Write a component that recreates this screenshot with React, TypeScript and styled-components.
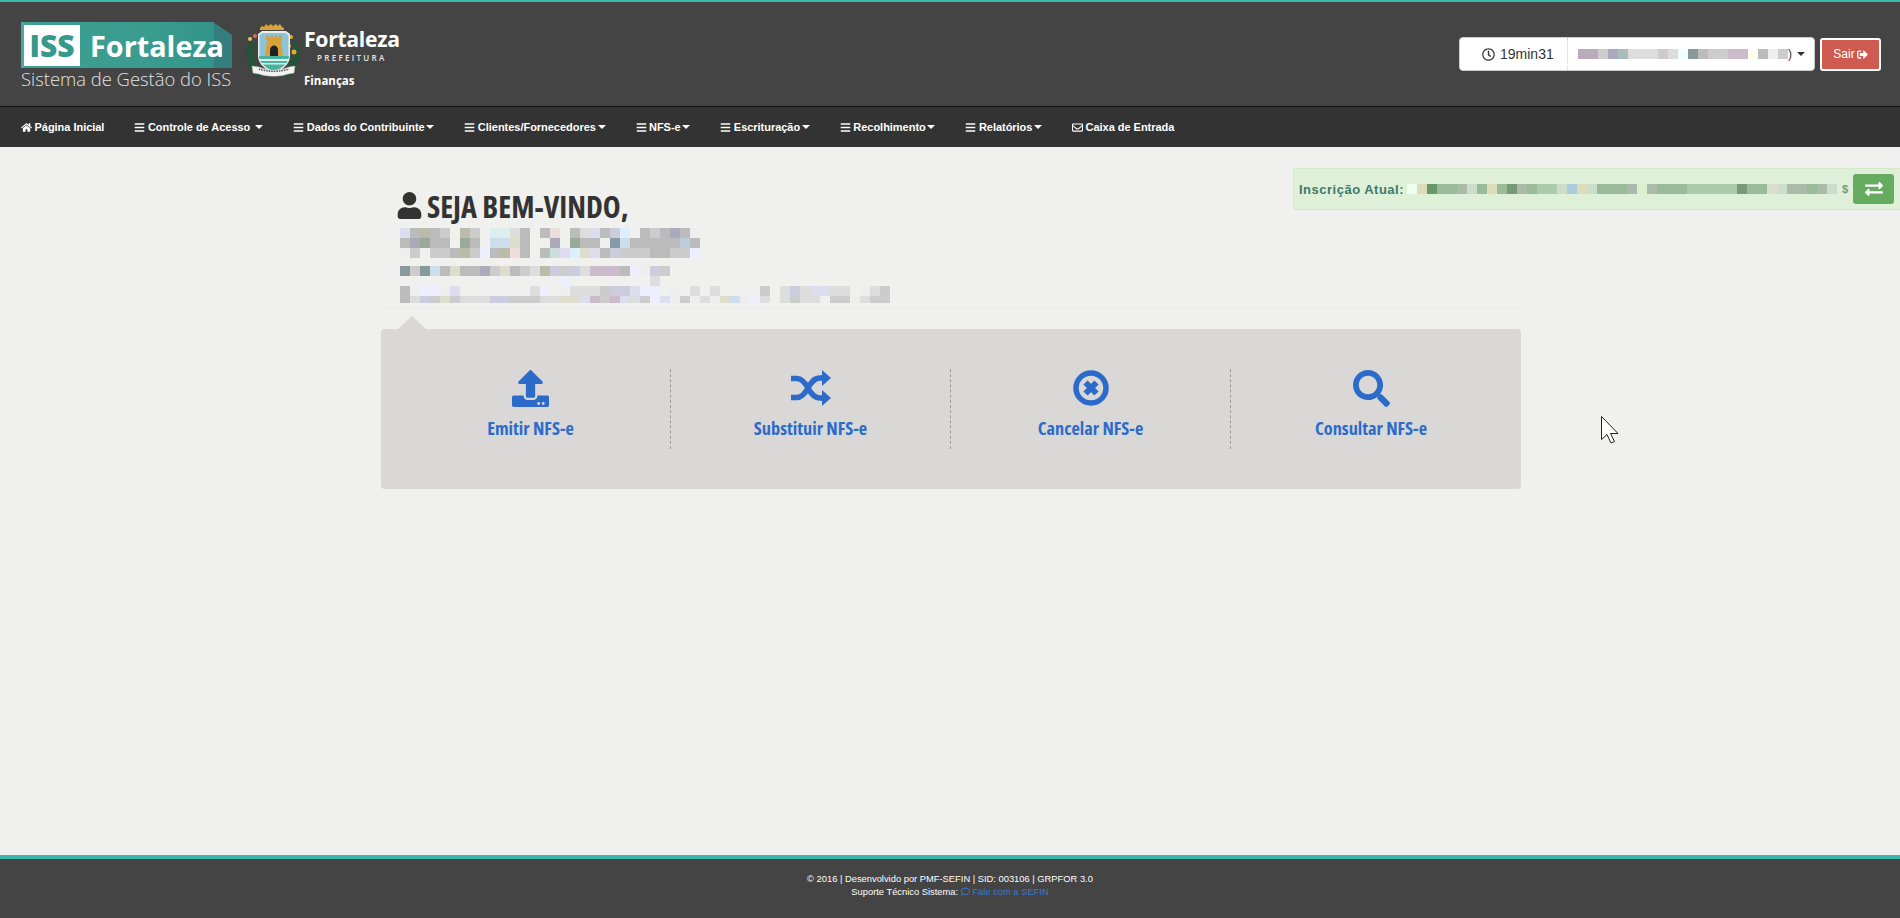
import React from "react";
import styled, { createGlobalStyle } from "styled-components";
import {
  FaHome, FaBars, FaRegEnvelope, FaRegClock, FaSignOutAlt, FaExchangeAlt, FaUser,
  FaUpload, FaSearch, FaRegComment,
} from "react-icons/fa";

const Global = createGlobalStyle`
  html, body { margin: 0; padding: 0; height: 100%; }
  body { background: #f0f0ee; font-family: "Liberation Sans", Arial, sans-serif; overflow: hidden; }
  * { box-sizing: border-box; }
`;

const Page = styled.div`
  height: 100vh;
  display: flex;
  flex-direction: column;
  position: relative;
`;

const Header = styled.header`
  height: 107px;
  flex: none;
  background: #444;
  border-top: 2px solid #3ab7ae;
  border-bottom: 1px solid #111;
  display: flex;
  align-items: flex-start;
  justify-content: space-between;
  padding: 20px 19px 0 21px;
`;

const Brand = styled.div`
  display: flex;
  align-items: flex-start;
`;

const IssLogo = styled.div`
  width: 211px;
  display: flex;
  flex-direction: column;
`;

const Banner = styled.div`
  height: 46px;
  background: linear-gradient(90deg, #45a9b2 0, #45a9b2 1.5%, #3da193 1.6%, #3a9b8f 60%, #33958a 91.4%, #347e80 91.5%);
  clip-path: polygon(0 0, 91% 0, 100% 28%, 100% 100%, 0 100%);
  display: flex;
  align-items: center;
  padding-left: 3px;
`;

const IssBox = styled.div`
  width: 56px;
  height: 41px;
  background: #fff;
  color: #36998c;
  font: 800 30px/41px "Open Sans", sans-serif;
  text-align: center;
`;

const BannerName = styled.div`
  color: #fff;
  font: 700 28.8px/41px "Open Sans", sans-serif;
  margin-left: 10px;
`;

const Tagline = styled.div`
  color: #e2e2e2;
  font: 300 18.4px/22px "Open Sans", sans-serif;
  margin-top: 0;
  white-space: nowrap;
`;

const Crest = styled.svg`
  width: 56px;
  height: 58px;
  margin: 0 0 0 13px;
  flex: none;
`;

const CityBlock = styled.div`
  margin-left: 3px;
  padding-top: 3px;
  color: #fff;
  display: flex;
  flex-direction: column;
`;

const CityName = styled.div`
  font: 700 21.2px/28px "Open Sans", sans-serif;
  letter-spacing: -0.3px;
`;

const CitySub = styled.div`
  font: 600 8px/10px "Open Sans", sans-serif;
  letter-spacing: 2.3px;
  margin-left: 13px;
  color: #e6e6e6;
`;

const CityDept = styled.div`
  font: 700 11.5px/14px "Open Sans", sans-serif;
  margin-top: 11px;
`;

const TopRight = styled.div`
  display: flex;
  align-items: center;
  gap: 5px;
  margin-top: 15px;
`;

const Session = styled.div`
  width: 356px;
  height: 34px;
  background: #fff;
  border: 1px solid #ccc;
  border-radius: 4px;
  display: flex;
  align-items: center;
  color: #333;
  font-size: 14px;
`;

const Timer = styled.div`
  width: 108px;
  height: 100%;
  border-right: 1px dotted #d0d0d0;
  display: flex;
  align-items: center;
  gap: 5px;
  padding-left: 22px;
  svg { font-size: 13px; }
`;

const UserName = styled.div`
  flex: 1;
  display: flex;
  align-items: center;
  padding-left: 10px;
  font-size: 12px;
`;

const Caret = styled.span<{ $gap?: number }>`
  display: inline-block;
  width: 0;
  height: 0;
  margin-left: ${(p) => p.$gap ?? 1.7}px;
  border-top: 4px solid currentColor;
  border-left: 4px solid transparent;
  border-right: 4px solid transparent;
`;

const Exit = styled.button`
  width: 61px;
  height: 33px;
  background: #cf5a50;
  color: #fff;
  border: 2px solid #fff;
  border-radius: 3px;
  font: 12px "Liberation Sans", Arial, sans-serif;
  display: flex;
  align-items: center;
  justify-content: center;
  gap: 2px;
  padding: 0;
  svg { font-size: 11px; }
`;

const Nav = styled.nav`
  height: 40px;
  flex: none;
  background: #333;
  display: flex;
  align-items: center;
  padding-left: 6px;
`;

const NavItem = styled.a`
  padding: 0 15px;
  display: flex;
  align-items: center;
  color: #fff;
  font: 700 11px "Liberation Sans", Arial, sans-serif;
  letter-spacing: -0.03px;
  white-space: nowrap;
  svg { font-size: 11px; margin-right: 2.5px; }
`;

const Main = styled.main`
  flex: 1;
  min-height: 0;
  padding-left: 2px;
`;

const Inscription = styled.div`
  float: right;
  width: 607px;
  height: 42px;
  margin-top: 21px;
  background: #dff0d8;
  border: 1px solid #d6e9c6;
  border-right: none;
  border-radius: 4px 0 0 4px;
  display: flex;
  align-items: center;
  padding-left: 5px;
  color: #3d7a6b;
  font-size: 13px;
  font-weight: 700;
`;

const InscriptionLabel = styled.span`
  letter-spacing: 0.5px;
  margin-right: 3px;
`;

const MaskEnd = styled.span`
  margin-left: 5px;
  font-size: 11px;
  color: #6c9a86;
`;

const SwapButton = styled.button`
  width: 41px;
  height: 30px;
  margin-left: auto;
  margin-right: 6px;
  background: #66ac60;
  border: none;
  border-radius: 3px;
  color: #fff;
  font-size: 18px;
  display: flex;
  align-items: center;
  justify-content: center;
  padding: 0;
`;

const Container = styled.div`
  width: 1140px;
  margin: 0 auto;
  padding-top: 41px;
`;

const Greeting = styled.h1`
  margin: 0 0 0 15px;
  height: 40px;
  display: flex;
  align-items: flex-start;
  gap: 4px;
  color: #333;
  font: 700 30.2px/38px "Open Sans", sans-serif;
  font-stretch: 75%;
  text-transform: uppercase;
  svg { font-size: 27px; margin-top: 4px; }
`;

const MosaicSvg = styled.svg`
  display: block;
  shape-rendering: crispEdges;
  flex: none;
`;

const WhoBlock = styled.div`
  margin-left: 19px;
  margin-top: 0;
  display: flex;
  flex-direction: column;
  gap: 8px;
`;

const Rule = styled.div`
  height: 1px;
  background: #ebebe9;
  margin-top: 5px;
`;

const Panel = styled.section`
  position: relative;
  margin-top: 20px;
  height: 160px;
  background: #d9d8d6;
  border-radius: 4px;
  padding: 40px 10px 0;
  display: grid;
  grid-template-columns: repeat(4, 1fr);
  align-items: start;
  &::before {
    content: "";
    position: absolute;
    left: 17px;
    top: -13px;
    border-left: 14px solid transparent;
    border-right: 14px solid transparent;
    border-bottom: 13px solid #d9d8d6;
  }
`;

const Action = styled.a`
  height: 80px;
  display: flex;
  flex-direction: column;
  align-items: center;
  color: #2d6bcb;
  border-right: 1px dashed #9a9c98;
  &:last-child { border-right: none; }
`;

const ActionIcon = styled.div`
  height: 46px;
  margin-top: 1px;
  display: flex;
  align-items: flex-start;
  justify-content: center;
  font-size: 37px;
`;

const ActionLabel = styled.div`
  font: 700 18.3px/24px "Open Sans", sans-serif;
  font-stretch: 75%;
`;

const Footer = styled.footer`
  height: 63px;
  flex: none;
  background: #444;
  border-top: 4px solid #3ab7ae;
  padding-top: 14px;
  color: #fff;
  font: 9.36px/13px "Liberation Sans", Arial, sans-serif;
  text-align: center;
`;

const FooterLink = styled.a`
  color: #3c78cf;
  svg { font-size: 9px; vertical-align: -1px; }
`;

const Pointer = styled.svg`
  position: absolute;
  left: 1600px;
  top: 415px;
  width: 20px;
  height: 30px;
`;

type MosaicProps = { rows: string[]; cell?: number; rowHeights?: number[] };

function Mosaic({ rows, cell = 10, rowHeights }: MosaicProps) {
  const parsed = rows.map((r) => r.split(" "));
  const width = Math.max(...parsed.map((r) => r.length)) * cell;
  let y = 0;
  const rects: React.ReactNode[] = [];
  parsed.forEach((r, i) => {
    const h = rowHeights?.[i] ?? cell;
    r.forEach((c, j) => {
      if (c !== ".") rects.push(<rect key={`${i}-${j}`} x={j * cell} y={y} width={cell} height={h} fill={`#${c}`} />);
    });
    y += h;
  });
  return (
    <MosaicSvg width={width} height={y} viewBox={`0 0 ${width} ${y}`}>
      {rects}
    </MosaicSvg>
  );
}

const CrestArt = () => (
  <Crest viewBox="0 0 56 58">
    <path d="M14 56C4 50 0 38 2 26c1-4 3-7 6-9 0 13 2 26 10 36zM42 56c10-6 14-18 12-30-1-4-3-7-6-9 0 13-2 26-10 36z" fill="#24523a" />
    <circle cx="5" cy="17" r="2" fill="#e8c25a" /><circle cx="10" cy="14" r="2" fill="#d8704a" />
    <circle cx="46" cy="15" r="2" fill="#e8a92a" /><circle cx="49" cy="30" r="2.5" fill="#e8a92a" /><circle cx="44" cy="24" r="2" fill="#e8a92a" />
    <path d="M15 6l2-2 2 1 2-3 2 2 3-2 2 2 3-2 2 2 2-2 2 3 2 1v2H15z" fill="#d9a13a" />
    <path d="M17 9h24l4 3v22c0 8-8 14-16 18-8-4-16-10-16-18V12z" fill="#e9eef0" />
    <path d="M14.500 13l3-2h23l3 2v21H14.500z" fill="#8cc4d8" />
    <path d="M14 34h30c0 7-7 12-15 16-8-4-15-9-15-16z" fill="#49b29c" />
    <path d="M20 34l2-16h-1v-5h3v2h2v-2h2v2h2v-2h2v2h2v-2h3v5h-1l2 16z" fill="#d9a13a" />
    <path d="M25 34v-6c0-6 8-6 8 0v6z" fill="#222" />
    <path d="M14 37h30v2H14zM16 41h26v1.500H16z" fill="#dff0e8" />
    <path d="M7 44l7 1c8 4 22 4 30 0l6-1-1 7-6 1c-8 3-21 3-29 0l-6-1z" fill="#f4f4f4" stroke="#bbb" strokeWidth=".5" />
    <path d="M14 47c8 3 22 3 30 0" stroke="#555" strokeWidth="1.500" strokeDasharray="1.500 1" fill="none" />
  </Crest>
);

const ShuffleIcon = () => (
  <svg width="40" height="36" viewBox="0 0 40 36">
    <path d="M0 8.500h6c5 0 8 4 11 9.500s6 10 12 10h4M0 27.500h6c5 0 8-4 11-9.500s6-10 12-10h4" fill="none" stroke="currentColor" strokeWidth="5.500" />
    <path d="M31 0l9 8-9 8zM31 20l9 8-9 8z" fill="currentColor" />
  </svg>
);

const CancelIcon = () => (
  <svg width="36" height="36" viewBox="0 0 36 36">
    <circle cx="18" cy="18" r="15" fill="none" stroke="currentColor" strokeWidth="5.500" />
    <path d="M12.500 12.500l11 11M23.500 12.500l-11 11" fill="none" stroke="currentColor" strokeWidth="6" />
  </svg>
);

const m1 = [
  "dde bbb bba bbb ccc . bba ccc . dee dee ddd bbb . bbb edd . bbb ddd dde bbb ccd def . bbb ccc bbb aab bbb eee",
  "bbb aab 9a9 bbb bbb . 9a9 bbb . cde cde ddc bbb . . aab . 9a9 bbb bbb . 89a cde bbb bbb bbb bbb bbb bcd bbb",
  "eee ccc . ccc ccc bbb bba ccc eef bbb bba edd bbb . bbb cdd dde def ddc dde bbb ccd ccc ccc ccc bbb bbb ccc ccc eef",
];
const m2 = [
  "899 ccc 899 cde bbb ddc bbb bbb aab ccc ddc bbb ccc ddd bba ccd ccc ccd ddd cbc cbc cbc bbb eef eee ccd ccc",
  ". . . . . . . . . . . . . . . . eef . . . . . . . . ddd",
];
const m3 = [
  "bbb eee eef eef eee dde . . . . . . . ddd eef . eee ddd ddd ddd ccc ccd ccd dde eef eef . eee . ddd . ddd . . . . ccc . ddd ccd ddd dde dde ddd ddd . eee ddd ccc",
  "bbb ddd ccd ccc ddc ccc ddd ddd ddd ccd ccd ccc ccc ccc ddd ddd ddc ddc dde cbc ccc cbc dde ddd ccc eef dde eee ccc eee ddd eee ddc cde eee eef ddd . ddd ccc ddd ddd . ccc ccc eee ddd ccc ccc",
];
const mUser = ["bab bab ccc aab abb ddd ddd ddd ccc ddd eff 899 bbb ccc ccc cbc cbc ffe bbb eee ccc"];
const mIns = [
  "efe ddb 696 9b9 9b9 aba cdc 9b9 ddb 9b9 797 aba 9b9 aca aca cdc acd ddb cdc 9b9 9b9 9b9 aba dec aba 9b9 9b9 9b9 aca aca aca aca aca 797 9b9 9b9 ddc cdc aba aba 9b9 aba cdc",
];

const navItems: { icon: React.ReactNode; label: string; gap?: number; caret?: boolean }[] = [
  { icon: <FaHome />, label: "Página Inicial" },
  { icon: <FaBars />, label: "Controle de Acesso", caret: true, gap: 5 },
  { icon: <FaBars />, label: "Dados do Contribuinte", caret: true },
  { icon: <FaBars />, label: "Clientes/Fornecedores", caret: true },
  { icon: <FaBars />, label: "NFS-e", caret: true },
  { icon: <FaBars />, label: "Escrituração", caret: true },
  { icon: <FaBars />, label: "Recolhimento", caret: true },
  { icon: <FaBars />, label: "Relatórios", caret: true },
  { icon: <FaRegEnvelope />, label: "Caixa de Entrada" },
];

const actions = [
  { icon: <FaUpload />, label: "Emitir NFS-e" },
  { icon: <ShuffleIcon />, label: "Substituir NFS-e" },
  { icon: <CancelIcon />, label: "Cancelar NFS-e" },
  { icon: <FaSearch />, label: "Consultar NFS-e" },
];

export default function App() {
  return (
    <Page>
      <Global />
      <Header>
        <Brand>
          <IssLogo>
            <Banner>
              <IssBox>ISS</IssBox>
              <BannerName>Fortaleza</BannerName>
            </Banner>
            <Tagline>Sistema de Gestão do ISS</Tagline>
          </IssLogo>
          <CrestArt />
          <CityBlock>
            <CityName>Fortaleza</CityName>
            <CitySub>PREFEITURA</CitySub>
            <CityDept>Finanças</CityDept>
          </CityBlock>
        </Brand>
        <TopRight>
          <Session>
            <Timer>
              <FaRegClock />
              19min31
            </Timer>
            <UserName>
              <Mosaic rows={mUser} />
              <span>)</span>
              <Caret $gap={5} />
            </UserName>
          </Session>
          <Exit>
            Sair
            <FaSignOutAlt />
          </Exit>
        </TopRight>
      </Header>
      <Nav>
        {navItems.map((it) => (
          <NavItem key={it.label}>
            {it.icon}
            {it.label}
            {it.caret && <Caret $gap={it.gap} />}
          </NavItem>
        ))}
      </Nav>
      <Main>
        <Inscription>
          <InscriptionLabel>Inscrição Atual:</InscriptionLabel>
          <Mosaic rows={mIns} />
          <MaskEnd>$</MaskEnd>
          <SwapButton>
            <FaExchangeAlt />
          </SwapButton>
        </Inscription>
        <Container>
          <Greeting>
            <FaUser />
            Seja bem-vindo,
          </Greeting>
          <WhoBlock>
            <Mosaic rows={m1} />
            <div>
              <Mosaic rows={m2} />
              <Mosaic rows={m3} rowHeights={[10, 7]} />
            </div>
          </WhoBlock>
          <Rule />
          <Panel>
            {actions.map((a) => (
              <Action key={a.label}>
                <ActionIcon>{a.icon}</ActionIcon>
                <ActionLabel>{a.label}</ActionLabel>
              </Action>
            ))}
          </Panel>
        </Container>
      </Main>
      <Footer>
        <div>© 2016 | Desenvolvido por PMF-SEFIN | SID: 003106 | GRPFOR 3.0</div>
        <div>
          Suporte Técnico Sistema:{" "}
          <FooterLink>
            <FaRegComment /> Fale com a SEFIN
          </FooterLink>
        </div>
      </Footer>
      <Pointer viewBox="0 0 20 30">
        <path d="M1.500 1.500v23l5.500-5 4 8.500 3.500-1.500-4-8h7.500z" fill="#fff" stroke="#222" strokeWidth="1" />
      </Pointer>
    </Page>
  );
}
